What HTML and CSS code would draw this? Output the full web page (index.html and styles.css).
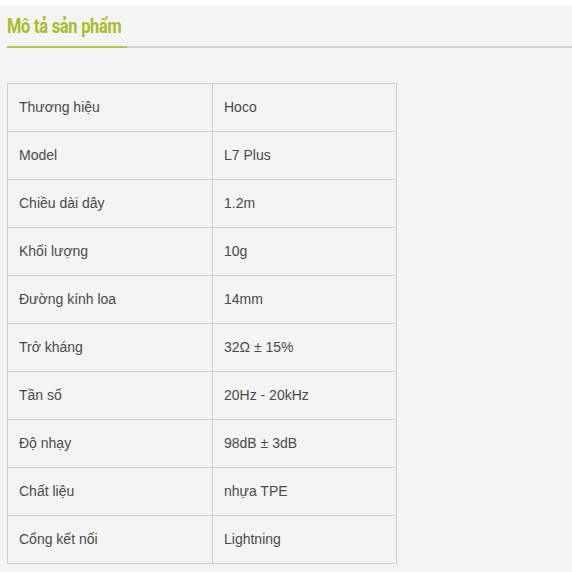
FILE: index.html
```html
<!DOCTYPE html>
<html lang="vi">
<head>
<meta charset="utf-8">
<link rel="stylesheet" href="styles.css">
</head>
<body>
<div class="strip"></div>
<div class="page">
  <div class="tabs">
    <div class="tab"><span class="tab-text">Mô tả sản phẩm</span></div>
  </div>
  <table class="spec">
    <tr><td>Thương hiệu</td><td>Hoco</td></tr>
    <tr><td>Model</td><td>L7 Plus</td></tr>
    <tr><td>Chiều dài dây</td><td>1.2m</td></tr>
    <tr><td>Khối lượng</td><td>10g</td></tr>
    <tr><td>Đường kính loa</td><td>14mm</td></tr>
    <tr><td>Trở kháng</td><td>32Ω ± 15%</td></tr>
    <tr><td>Tần số</td><td>20Hz - 20kHz</td></tr>
    <tr><td>Độ nhạy</td><td>98dB ± 3dB</td></tr>
    <tr><td>Chất liệu</td><td>nhựa TPE</td></tr>
    <tr><td>Cổng kết nối</td><td>Lightning</td></tr>
  </table>
</div>
</body>
</html>
```
FILE: styles.css
```css
html, body {
  margin: 0;
  padding: 0;
  background: #f4f4f4;
}
.strip {
  height: 6px;
  background: #fff;
}
.page {
  background: #f4f4f4;
  padding: 0 0 0 7px;
  height: 566px;
  box-sizing: border-box;
}
.tabs {
  display: flex;
  border-bottom: 2px solid #d2d2d2;
  height: 42px;
  box-sizing: border-box;
}
.tab {
  width: 120px;
  padding-top: 8px;
  box-sizing: border-box;
  border-bottom: 2px solid #b6c64a;
  margin-bottom: -2px;
  white-space: nowrap;
}
.tab-text {
  display: inline-block;
  font-family: "Roboto", "Liberation Sans", sans-serif;
  font-weight: 700;
  font-size: 21px;
  line-height: 25px;
  letter-spacing: -0.3px;
  color: #a9bc2b;
  transform: scaleX(0.78);
  transform-origin: left center;
}
.spec {
  margin-top: 35px;
  border-collapse: collapse;
  width: 390px;
  font-family: "Liberation Sans", Arial, sans-serif;
  font-size: 14px;
  color: #4a4a4a;
}
.spec td {
  border: 1px solid #cfcfcf;
  height: 48px;
  padding: 0 0 2px 11px;
  box-sizing: border-box;
  vertical-align: middle;
}
.spec td:first-child {
  width: 205px;
}
```
